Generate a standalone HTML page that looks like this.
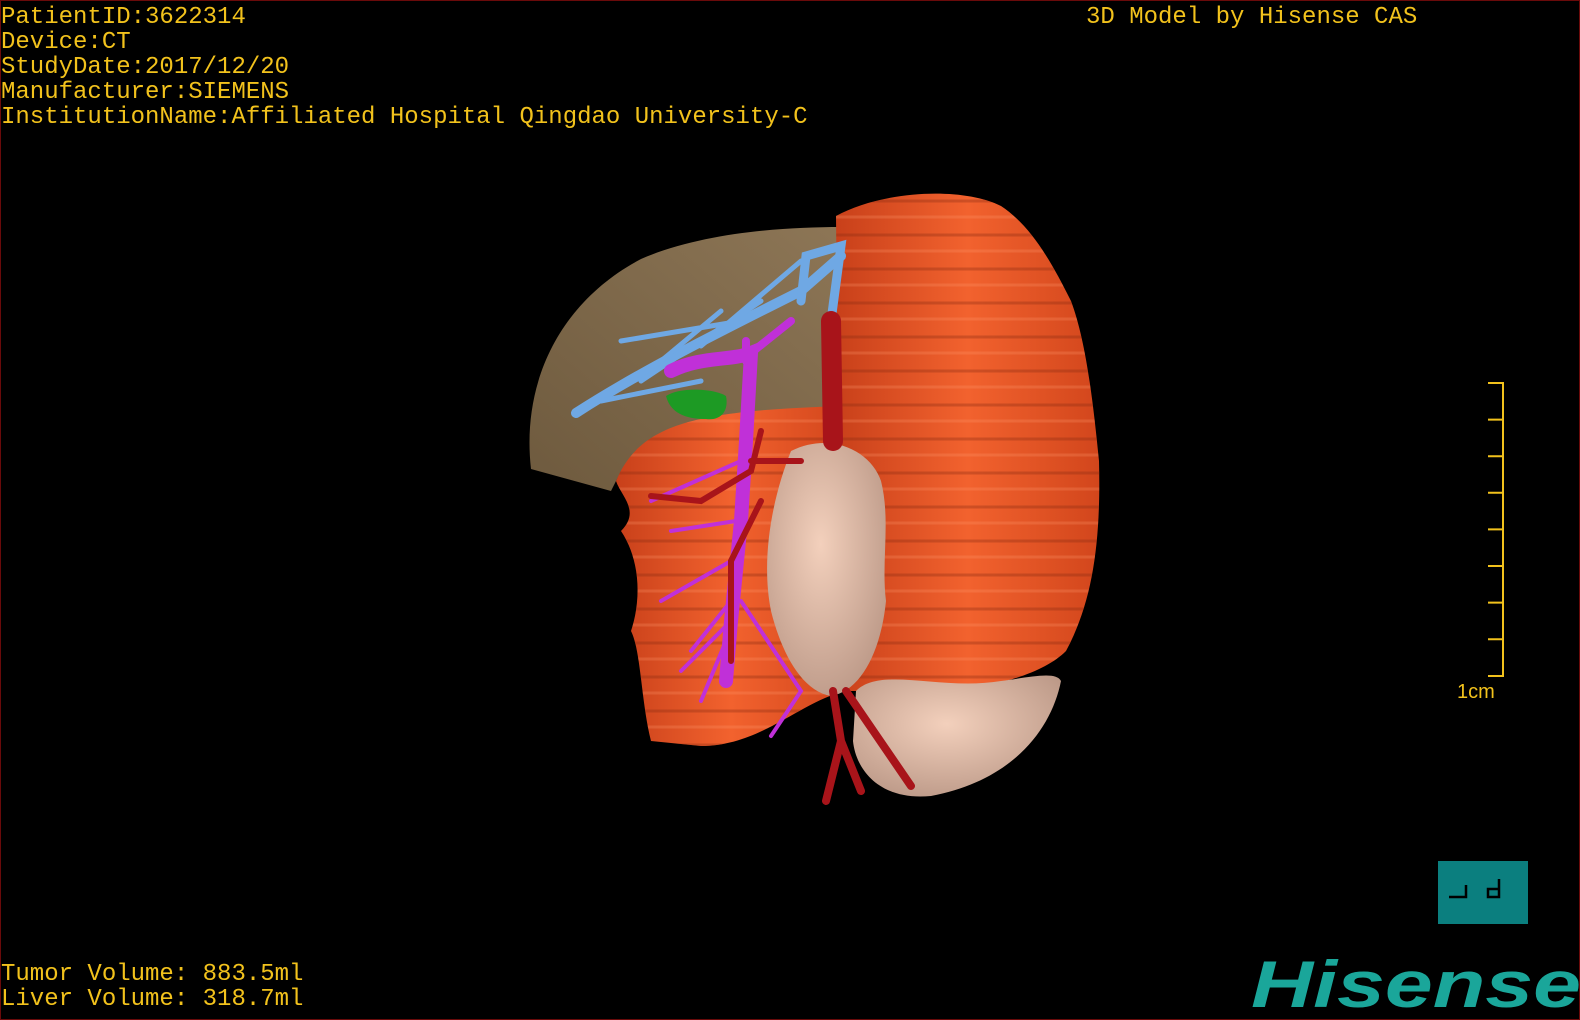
<!DOCTYPE html>
<html><head><meta charset="utf-8"><style>
html,body{margin:0;padding:0;background:#000;}
#s{position:relative;width:1580px;height:1020px;background:#000;overflow:hidden;box-sizing:border-box;border:1px solid #6a0a0a;}
.t{position:absolute;font-family:"Liberation Mono",monospace;font-size:24px;color:#f2c21c;white-space:pre;line-height:25px;}
</style></head><body><div id="s">
<div class="t" style="left:0;top:4px">PatientID:3622314
Device:CT
StudyDate:2017/12/20
Manufacturer:SIEMENS
InstitutionName:Affiliated Hospital Qingdao University-C</div>
<div class="t" style="left:1085px;top:4px">3D Model by Hisense CAS</div>
<div class="t" style="left:0;top:961px">Tumor Volume: 883.5ml
Liver Volume: 318.7ml</div>
<svg width="1580" height="1020" style="position:absolute;left:0;top:0">
<defs>
<linearGradient id="og" x1="0" x2="1"><stop offset="0" stop-color="#c8401a"/><stop offset=".5" stop-color="#f2622e"/><stop offset="1" stop-color="#d2461c"/></linearGradient>
<linearGradient id="bg" x1="0" x2="1" y1="1" y2="0"><stop offset="0" stop-color="#6e5a3e"/><stop offset="1" stop-color="#8d7656"/></linearGradient>
<radialGradient id="pg" cx=".45" cy=".4" r=".7"><stop offset="0" stop-color="#f3d0bc"/><stop offset="1" stop-color="#b89584"/></radialGradient>
<pattern id="str" width="40" height="34" patternUnits="userSpaceOnUse"><path d="M0 30 H40" stroke="#8a2a10" stroke-width="3" opacity=".35"/><path d="M0 12 H40" stroke="#ff9a70" stroke-width="3" opacity=".25"/></pattern>
</defs>
<path d="M530 468 C520 380 560 300 640 258 C700 232 780 226 840 226 L845 470 L620 470 L610 490 Z" fill="url(#bg)"/>
<path d="M615 480 C640 420 700 410 840 405 L845 690 C800 700 760 745 700 745 L650 740 C640 700 640 650 630 630 C640 600 640 560 620 530 C640 510 620 495 615 480Z" fill="url(#og)"/>
<path d="M615 480 C640 420 700 410 840 405 L845 690 C800 700 760 745 700 745 L650 740 C640 700 640 650 630 630 C640 600 640 560 620 530 C640 510 620 495 615 480Z" fill="url(#str)"/>
<path d="M835 215 C880 190 960 185 1000 205 C1030 225 1050 260 1070 300 C1085 340 1092 400 1098 460 C1100 540 1092 600 1065 650 C1035 680 960 695 880 690 L840 690 Z" fill="url(#og)"/>
<path d="M835 215 C880 190 960 185 1000 205 C1030 225 1050 260 1070 300 C1085 340 1092 400 1098 460 C1100 540 1092 600 1065 650 C1035 680 960 695 880 690 L840 690 Z" fill="url(#str)"/>
<path d="M855 690 C880 665 940 690 1000 680 C1030 676 1055 670 1060 680 C1050 730 1010 780 930 795 C880 800 855 770 852 740 Z" fill="url(#pg)"/>
<path d="M790 450 C830 430 870 450 880 480 C890 520 880 560 885 600 C880 650 860 690 830 695 C800 690 780 650 770 610 C760 560 770 500 790 450Z" fill="url(#pg)"/>
<g stroke="#6fa8e4" stroke-linecap="round" fill="none">
<path d="M575 412 C640 370 720 330 800 290 L840 255" stroke-width="10"/>
<path d="M620 340 L740 320 M660 360 L720 310 M600 400 L700 380 M640 380 L760 300 M700 345 L800 260" stroke-width="5"/>
<path d="M800 300 L805 255 L840 245 L830 320" stroke-width="9"/>
</g>
<path d="M665 395 C680 385 715 388 725 395 C728 410 720 420 705 418 C690 418 670 415 665 395Z" fill="#1d9a24"/>
<g stroke="#c030d8" stroke-linecap="round" fill="none">
<path d="M670 370 C700 355 730 360 750 352 L745 440 L740 520 L730 620 L725 680" stroke-width="14"/>
<path d="M745 340 L745 360 M750 352 L790 320" stroke-width="8"/>
<path d="M740 460 L650 500 M735 520 L670 530 M730 560 L660 600 M730 600 L690 650 M730 620 L680 670 M740 600 L800 690 L770 735 M725 640 L700 700" stroke-width="4"/>
</g>
<g stroke="#a8141a" stroke-linecap="round" fill="none">
<path d="M830 320 L832 440" stroke-width="20"/>
<path d="M832 690 L840 740 L825 800 M840 740 L860 790 M845 690 L910 785" stroke-width="8"/>
<path d="M760 430 L750 470 L700 500 L650 495 M750 460 L800 460 M760 500 L730 560 L730 660" stroke-width="6"/>
</g>
<path d="M1487 382 H1502 V675 H1487 M1487 418.6 H1502 M1487 455.2 H1502 M1487 491.8 H1502 M1487 528.4 H1502 M1487 565 H1502 M1487 601.6 H1502 M1487 638.2 H1502" stroke="#f2c21c" stroke-width="2" fill="none"/>
<text x="1456" y="697" font-family="Liberation Sans,sans-serif" font-size="20" fill="#f2c21c">1cm</text>
<rect x="1437" y="860" width="90" height="63" fill="#0b7f7f"/>
<path d="M1448 896 H1465 V884 M1498 878 V896 H1487 V888 H1498" stroke="#000" stroke-width="2.5" fill="none"/>
<text x="1250" y="1006" font-family="Liberation Sans,sans-serif" font-weight="bold" font-style="italic" font-size="66" fill="#1aa69a" textLength="330" lengthAdjust="spacingAndGlyphs">Hisense</text>
</svg>
</div></body></html>
